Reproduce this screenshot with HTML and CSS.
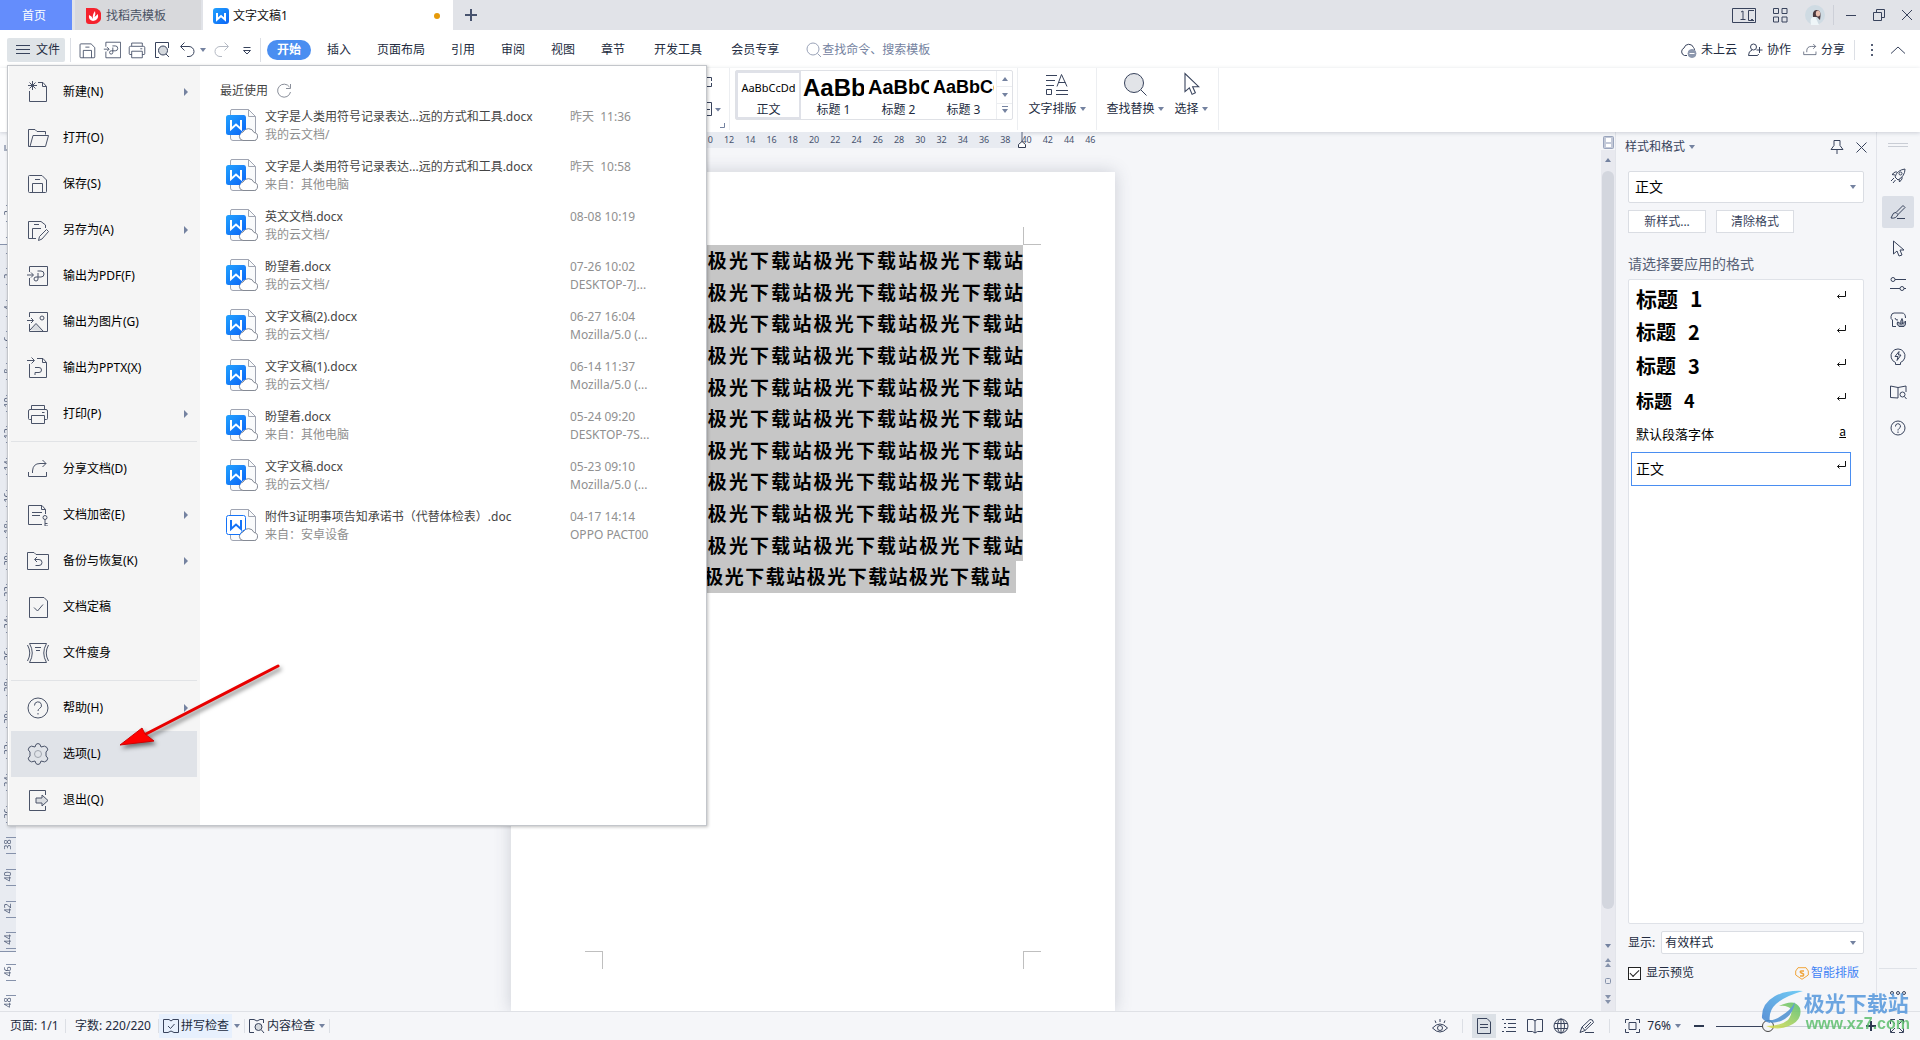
FILE: index.html
```html
<!DOCTYPE html>
<html lang="zh-CN">
<head>
<meta charset="utf-8">
<title>文字文稿1</title>
<link rel="stylesheet" href="styles.css">
</head>
<body>
<svg class="defs" aria-hidden="true">
  <defs>
    <linearGradient id="blue" x1="0" y1="0" x2="1" y2="1"><stop offset="0" stop-color="#22a2ff"/><stop offset="1" stop-color="#0a63f5"/></linearGradient>
    <linearGradient id="swBlue" x1="0" y1="1" x2="1" y2="0"><stop offset="0" stop-color="#3f7fd0"/><stop offset="1" stop-color="#5cc6f5"/></linearGradient>
    <linearGradient id="swGreen" x1="0" y1="1" x2="1" y2="0"><stop offset="0" stop-color="#e6e04a"/><stop offset="1" stop-color="#4fbd6c"/></linearGradient>
    <symbol id="cloudfile" viewBox="0 0 32 34">
      <path d="M5.500 1.500H22.500L29.500 8.500V32.500H7Q4.500 32.500 4.500 30V3Q4.500 1.500 6 1.500" fill="#fafbfc" stroke="#a0a5b2"/>
      <path d="M22.500 1.500V8.500H29.500" fill="none" stroke="#a0a5b2"/>
      <path d="M17 32.500H27A4 4 0 0 0 28 24.500A6 6 0 0 0 17 24A4.300 4.300 0 0 0 17 32.500Z" fill="#fff" stroke="#858a94"/>
    </symbol>
    <symbol id="docx" viewBox="0 0 32 34">
      <use href="#cloudfile"/>
      <path d="M2.500 7H18A2.500 2.500 0 0 1 20 9.500V21.500Q16 22 14 27H2.500A2.500 2.500 0 0 1 0 24.500V9.500A2.500 2.500 0 0 1 2.500 7Z" fill="url(#blue)"/>
      <path d="M5 12V21L10 16.500L15 21V12" fill="none" stroke="#fff" stroke-width="2"/>
    </symbol>
    <symbol id="doc" viewBox="0 0 32 34">
      <use href="#cloudfile"/>
      <path d="M2.500 7.500H17.500A2 2 0 0 1 19.500 9.500V21.500Q16 22 14 26.500H2.500A2 2 0 0 1 .5 24.500V9.500A2 2 0 0 1 2.500 7.500Z" fill="#fff" stroke="#1473f8"/>
      <path d="M5 12V21L10 16.500L15 21V12" fill="none" stroke="#1473f8" stroke-width="2"/>
    </symbol>
    <symbol id="enter" viewBox="0 0 10 10"><path d="M9.500 1V6.500H1.500M3.500 4.500L1.500 6.500L3.500 8.500" fill="none" stroke="#111"/></symbol>
    <symbol id="save" viewBox="0 0 22 22"><path d="M2.500 4.500Q2.500 3.500 3.500 3.500H16L20.500 8V19.500Q20.500 20.500 19.500 20.500H3.500Q2.500 20.500 2.500 19.500ZM6.500 20.500V11.500H16.500V20.500M9 7.500H14"/></symbol>
    <symbol id="pdf" viewBox="0 0 22 22"><path d="M3.500 7V1.500H21.500V20.500H3.500V13M1 10H7M5 7.500L7.500 10L5 12.500M11.500 6H15A3 3 0 0 1 15 12H10A2 2 0 1 0 12 14V8"/></symbol>
    <symbol id="print" viewBox="0 0 22 22"><path d="M4.500 6V2.500H17.500V6M4.500 16.500H2.500Q1.500 16.500 1.500 15.500V8Q1.500 6.500 3 6.500H19Q20.500 6.500 20.500 8V15.500Q20.500 16.500 19.500 16.500H17.500M4.500 12.500H17.500V20.500H4.500ZM15 9.500H17.500"/></symbol>
    <symbol id="share" viewBox="0 0 22 22"><path d="M2.500 14V18.500H20.500V14M7 15V13Q7 6.500 14 6.500H20M16.500 3L20 6.500L16.500 10"/></symbol>
    <symbol id="help" viewBox="0 0 22 22"><circle cx="11" cy="11" r="10"/><path d="M7.500 8.500A3.500 3.500 0 1 1 12.500 11.500Q11 12.500 11 14M11 16V17.500"/></symbol>
    <symbol id="cursor" viewBox="0 0 22 22"><path d="M5.500 1.500V18L9.500 14.500L12 20.500L15 19L12.500 13.500H18Z"/></symbol>
  </defs>
</svg>

<header class="tabs">
  <button class="tab home">首页</button>
  <button class="tab store"><svg width="15" height="16" viewBox="0 0 15 16"><path d="M0 0H8A7.500 8 0 0 1 8 16H3Q0 16 0 13Z" fill="#f5222d"/><path d="M7 13Q2 12 3 7Q6 8 7 11Q6 7 9 3Q10 6 8.500 9L12 6Q13 12 7 13" fill="#fff"/></svg>找稻壳模板</button>
  <button class="tab current"><svg width="16" height="16" viewBox="0 0 16 16"><rect width="16" height="16" rx="3" fill="url(#blue)"/><path d="M4 5V11.500L8 8L12 11.500V5" fill="none" stroke="#fff" stroke-width="2"/></svg>文字文稿1<span class="unsaved"></span></button>
  <button class="plus" aria-label="新建标签"><svg width="12" height="12" viewBox="0 0 12 12"><path d="M6 0V12M0 6H12" stroke="#47536e" stroke-width="2"/></svg></button>
  <div class="window-tools">
    <svg class="ln" width="24" height="15" viewBox="0 0 24 15"><path d="M.5.5H23.500V14.500H.5ZM9 4L11 3V11M8.500 11.500H13.500M22 2.500H16.500V12.500H22M19 11.500H21"/></svg>
    <svg class="ln" width="15" height="15" viewBox="0 0 15 15"><path d="M.5.5H5.500V5.500H.5ZM9 .5H14V5.500H9ZM.5 9H5.500V14H.5ZM9 9H14V14H9Z"/></svg>
    <svg width="20" height="20" viewBox="0 0 20 20"><circle cx="10" cy="10" r="10" fill="#cfdbe3"/><path d="M6 20Q4 12 10 11L14 20Z" fill="#eef5f8"/><path d="M8 12Q7 6 11 5Q16 4 15.500 11L15 15L12 12Z" fill="#4a3a40"/><ellipse cx="13" cy="8.500" rx="2.200" ry="3" fill="#e9bfb0"/></svg>
    <i class="vline"></i>
    <button aria-label="最小化"><svg class="ln" width="10" height="12" viewBox="0 0 10 12"><path d="M0 6.500H10"/></svg></button>
    <button aria-label="还原"><svg class="ln" width="12" height="12" viewBox="0 0 12 12"><path d="M.5 3.500H8.500V11.500H.5ZM3.500 3V.5H11.500V8.500H9"/></svg></button>
    <button aria-label="关闭"><svg class="ln" width="10" height="10" viewBox="0 0 10 10"><path d="M0 0L10 10M10 0L0 10"/></svg></button>
  </div>
</header>

<nav class="menubar">
  <button class="file-btn"><svg class="ln" width="14" height="11" viewBox="0 0 14 11"><path d="M0 1.500H14M0 5.500H14M0 9.500H14"/></svg>文件</button>
  <i class="vline tall"></i>
  <div class="quick">
    <button aria-label="保存"><svg class="ln" width="18" height="18"><use href="#save"/></svg></button>
    <button aria-label="输出为PDF"><svg class="ln" width="18" height="18"><use href="#pdf"/></svg></button>
    <button aria-label="打印"><svg class="ln" width="18" height="18"><use href="#print"/></svg></button>
    <button aria-label="打印预览"><svg class="ln" width="18" height="18" viewBox="0 0 18 18"><path d="M6 16.500H2.500V1.500H15.500V7M13 13L16 16"/><circle cx="10" cy="9.500" r="4.500" fill="#d5d9de"/></svg></button>
    <button aria-label="撤销"><svg class="ln" width="18" height="18" viewBox="0 0 18 18"><path d="M3 5.500H11A5 5 0 0 1 11 15.500H9M6.500 1.500L2.500 5.500L6.500 9.500"/></svg></button>
    <i class="caret"></i>
    <button aria-label="恢复"><svg class="ln faint" width="18" height="18" viewBox="0 0 18 18"><path d="M15 5.500H7A5 5 0 0 0 7 15.500H9M11.500 1.500L15.500 5.500L11.500 9.500"/></svg></button>
    <button aria-label="自定义"><svg class="ln" width="18" height="18" viewBox="0 0 18 18"><path d="M5.500 6.500H12.500M5.500 9.500H12.500L9 13Z"/></svg></button>
  </div>
  <i class="vline tall"></i>
  <button class="menu on">开始</button>
  <button class="menu">插入</button>
  <button class="menu">页面布局</button>
  <button class="menu">引用</button>
  <button class="menu">审阅</button>
  <button class="menu">视图</button>
  <button class="menu">章节</button>
  <button class="menu wide">开发工具</button>
  <button class="menu wide">会员专享</button>
  <label class="search"><svg class="ln" width="16" height="16" viewBox="0 0 16 16"><circle cx="7" cy="7" r="6"/><path d="M11.500 11.500L15 15"/></svg><input type="text" placeholder="查找命令、搜索模板" aria-label="查找命令、搜索模板"></label>
  <div class="menu-right">
    <button><svg class="ln" width="17" height="16" viewBox="0 0 17 16"><path d="M7 13.500H4.500A4 4 0 0 1 4 6A5 5 0 0 1 13.500 5.500Q14.500 6.500 14.500 8"/><circle cx="12" cy="11.500" r="4" fill="#8d98ae" stroke="#8d98ae"/><path d="M9.500 11.500H14.500" stroke="#fff"/></svg>未上云</button>
    <button><svg class="ln" width="15" height="16" viewBox="0 0 15 16"><circle cx="5.500" cy="5" r="3"/><path d="M4 8Q.5 9 .5 13.500H9.500Q10 13.500 10.500 12M11.500 5V11M8.500 8H14.500"/></svg>协作</button>
    <button><svg class="ln" width="15" height="15"><use href="#share"/></svg>分享</button>
    <i class="vline"></i>
    <button aria-label="更多"><svg width="4" height="14" viewBox="0 0 4 14"><path d="M1 1H3V3H1ZM1 6H3V8H1ZM1 11H3V13H1Z" fill="#555f75"/></svg></button>
    <button class="fold" aria-label="折叠功能区"><svg class="ln" width="14" height="8" viewBox="0 0 14 8"><path d="M0 7.500L7 1L14 7.500"/></svg></button>
  </div>
</nav>

<section class="ribbon">
  <div class="para-group">
    <svg class="ln" width="28" height="60" viewBox="2 0 28 60"><path d="M2 9.500H13.500V13M2 18.500H13.500V15M5 34.500H13.500V47.500H5M8 41.500H12"/><path d="M17 40H23L20 43.500Z" fill="#7482a0" stroke="none"/><path d="M26.500 55V59.500H22" stroke="#7482a0"/></svg>
  </div>
  <i class="split"></i>
  <div class="gallery">
    <button class="style sel"><span class="s0">AaBbCcDd</span>正文</button>
    <button class="style"><span class="s1">AaBb</span>标题 1</button>
    <button class="style"><span class="s2">AaBbCc</span>标题 2</button>
    <button class="style"><span class="s3">AaBbCc</span>标题 3</button>
    <div class="spin"><button aria-label="上一行"><i class="caret up"></i></button><button aria-label="下一行"><i class="caret"></i></button><button aria-label="更多样式"><i class="caret more"></i></button></div>
  </div>
  <i class="split"></i>
  <button class="big layout"><svg class="ln" width="24" height="24" viewBox="0 0 24 24"><path d="M1 3.500H12M1 8.500H10M1 13.500H9M1.500 17.500H6.500V22.500H1.500ZM11 18.500H23M11 22.500H23M12 14.500L16.500 2.500L22 14.500M13.500 10.500H20.500"/></svg><span>文字排版<i class="caret"></i></span></button>
  <i class="split"></i>
  <button class="big find"><svg class="ln" width="24" height="24" viewBox="0 0 24 24"><circle cx="11" cy="11" r="9.500" fill="#e2e4e8"/><path d="M18 18L23.500 23.500"/></svg><span>查找替换<i class="caret"></i></span></button>
  <button class="big pick"><svg class="ln" width="24" height="24"><use href="#cursor"/></svg><span>选择<i class="caret"></i></span></button>
  <i class="split"></i>
</section>

<main class="work">
  <div class="ruler-v">
    <i class="corner"></i>
    <div class="marks"><span>2</span><span class="zero"></span><span>2</span><span>4</span><span>6</span><span>8</span><span>10</span><span>12</span><span>14</span><span>16</span><span>18</span><span>20</span><span>22</span><span>24</span><span>26</span><span>28</span><span>30</span><span>32</span><span>34</span><span>36</span><span>38</span><span>40</span><span>42</span><span>44</span><span>46</span><span>48</span></div>
  </div>
  <div class="canvas">
    <div class="sheet">
      <div class="ruler-h">
        <div class="nums"><span></span><span>2</span><span>4</span><span>6</span><span>8</span><span>10</span><span>12</span><span>14</span><span>16</span><span>18</span><span>20</span><span>22</span><span>24</span><span>26</span><span>28</span><span>30</span><span>32</span><span>34</span><span>36</span><span>38</span><span>40</span><span>42</span><span>44</span><span>46</span></div>
        <svg class="indent" width="10" height="16" viewBox="0 0 10 16"><path d="M5 0V10" stroke="#55617c" fill="none"/><path d="M1.500 15.500V12.500L5 9.500L8.500 12.500V15.500Z" fill="#fff" stroke="#333c52"/></svg>
      </div>
      <article class="page">
        <i class="crop tl"></i><i class="crop tr"></i><i class="crop bl"></i><i class="crop br"></i>
        <div class="text">
          <p>极光下载站极光下载站极光下载站极光下载站</p>
          <p>极光下载站极光下载站极光下载站极光下载站</p>
          <p>极光下载站极光下载站极光下载站极光下载站</p>
          <p>极光下载站极光下载站极光下载站极光下载站</p>
          <p>极光下载站极光下载站极光下载站极光下载站</p>
          <p>极光下载站极光下载站极光下载站极光下载站</p>
          <p>极光下载站极光下载站极光下载站极光下载站</p>
          <p>极光下载站极光下载站极光下载站极光下载站</p>
          <p>极光下载站极光下载站极光下载站极光下载站</p>
          <p>极光下载站极光下载站极光下载站极光下载站</p>
          <p class="last">极光下载站极光下载站极光下载站极光下载站</p>
        </div>
      </article>
    </div>
  </div>
  <div class="scroll">
    <svg width="11" height="13" viewBox="0 0 11 13"><rect x=".5" y=".5" width="10" height="12" rx="1" fill="#c3c9d8" stroke="#9aa5bd"/><path d="M3 2H8V6H3ZM3 8H8V11H3Z" fill="#fff"/></svg>
    <div class="track"><i class="caret up"></i><div class="thumb"></div><i class="caret"></i>
      <svg width="8" height="9" viewBox="0 0 8 9"><path d="M1 4L4 0L7 4ZM1 9L4 5L7 9Z" fill="#8692ab"/></svg>
      <svg width="8" height="8" viewBox="0 0 8 8"><rect x="1.500" y="1.500" width="5" height="5" rx="1" fill="none" stroke="#8692ab"/></svg>
      <svg width="8" height="9" viewBox="0 0 8 9"><path d="M1 0H7L4 4ZM1 5H7L4 9Z" fill="#8692ab"/></svg>
    </div>
  </div>
  <aside class="panel">
    <div class="panel-head"><span>样式和格式</span><i class="caret"></i>
      <button class="pin" aria-label="固定"><svg class="ln" width="14" height="14" viewBox="0 0 14 14"><path d="M4 .5H10V5.500L13 9.500H1L4 5.500ZM7 9.500V14"/></svg></button>
      <button class="close" aria-label="关闭"><svg class="ln" width="11" height="11" viewBox="0 0 11 11"><path d="M.5.5L10.500 10.500M10.500.5L.5 10.500"/></svg></button></div>
    <div class="select big-select"><select aria-label="当前样式"><option>正文</option></select><i class="caret"></i></div>
    <div class="btns"><button>新样式...</button><button>清除格式</button></div>
    <h2>请选择要应用的格式</h2>
    <ul class="styles">
      <li class="h1"><span>标题</span><span>1</span><svg width="10" height="10"><use href="#enter"/></svg></li>
      <li class="h2"><span>标题</span><span>2</span><svg width="10" height="10"><use href="#enter"/></svg></li>
      <li class="h3"><span>标题</span><span>3</span><svg width="10" height="10"><use href="#enter"/></svg></li>
      <li class="h4"><span>标题</span><span>4</span><svg width="10" height="10"><use href="#enter"/></svg></li>
      <li class="dflt"><span>默认段落字体</span><u>a</u></li>
      <li class="body sel"><span>正文</span><svg width="10" height="10"><use href="#enter"/></svg></li>
    </ul>
    <div class="show"><label for="show">显示:</label><div class="select"><select id="show"><option>有效样式</option></select><i class="caret"></i></div></div>
    <div class="preview"><input type="checkbox" id="pv" checked><label for="pv">显示预览</label>
      <a href="#"><svg width="14" height="13" viewBox="0 0 14 13"><path d="M3 .7H11L13.300 4V8L7 12.300L.7 8V4Z" fill="none" stroke="#f0a43a"/><path d="M9 4H6Q5 4.300 5.500 5.500L8.500 7Q9 8.500 8 9H5" fill="none" stroke="#f0a43a" stroke-width="1.500"/></svg>智能排版</a></div>
  </aside>
  <div class="rail">
    <i class="grip"></i>
    <button aria-label="快捷"><svg class="ln" width="16" height="16" viewBox="0 0 16 16"><path d="M5 9Q7 2 15 1Q15 8 8 12ZM5 7L2 6.500L5 4H7M9 11L9.500 14L12 11V9M4 10L1 13M5.500 12L3 15"/><circle cx="10.500" cy="5.500" r="1.500"/></svg></button>
    <button class="sel" aria-label="样式"><svg class="ln" width="16" height="16" viewBox="0 0 16 16"><path d="M6 8.500L13 1.500L15 3.500L8 10.500M6 8.500Q3 8.500 2.500 11L1 14Q6 15 8 10.500ZM7 14.500H15"/></svg></button>
    <button aria-label="选择"><svg class="ln" width="16" height="17" viewBox="0 0 16 17"><path d="M3.500 1V14L7 11L9 16L12 15L10 10H14Z"/></svg></button>
    <button aria-label="属性"><svg class="ln" width="16" height="16" viewBox="0 0 16 16"><circle cx="3" cy="3.500" r="2"/><circle cx="12" cy="12.500" r="2"/><path d="M5 3.500H16M0 12.500H10M14 12.500H16"/></svg></button>
    <button aria-label="素材"><svg class="ln" width="16" height="16" viewBox="0 0 16 16"><path d="M6 14.500H2.500V8M2.500 8Q.5 7 1 4.500Q1.500 1 4 1H12Q15.500 1 15.500 6M5 6Q5.500 8.500 8 8"/><path d="M9 14.500Q6 12 7.500 10Q9.500 10 11 12.500Q10 9 12 6.500Q13.500 9 12.500 12L15.500 9Q16.500 13 14 14.500Z" fill="#a5abb8"/></svg></button>
    <button aria-label="灵感"><svg class="ln" width="16" height="17" viewBox="0 0 16 17"><path d="M5.500 16.500V14.500A7 7 0 1 1 10.500 14.500V16.500ZM9 3.500L5 8.500H8L7 12.500L11 7H8.500Z"/></svg></button>
    <button aria-label="阅读"><svg class="ln" width="17" height="15" viewBox="0 0 17 15"><path d="M8 13L.5 12.500V1L8 2.500L16 1V7M8 2.500V13"/><circle cx="12.500" cy="9.500" r="2.500"/><path d="M14.500 11.500L16.500 14"/></svg></button>
    <button aria-label="帮助"><svg class="ln" width="16" height="16" viewBox="0 0 16 16"><circle cx="8" cy="8" r="7"/><path d="M5.500 6.500A2.500 2.500 0 1 1 9 8.500Q8 9 8 10.500M8 11.500V13"/></svg></button>
    <div class="rail-end"><svg class="ln" width="16" height="6" viewBox="0 0 16 6"><circle cx="2" cy="3" r="1.500"/><circle cx="8" cy="3" r="1.500"/><circle cx="14" cy="3" r="1.500"/></svg></div>
  </div>
</main>

<footer class="status">
  <span class="pages">页面: 1/1</span><i class="vline"></i>
  <span class="words">字数: 220/220</span><i class="vline"></i>
  <button class="spell"><svg class="ln" width="16" height="15" viewBox="0 0 16 15"><path d="M6 .5H.5V13.500H5L8 12L11 13.500H15.500V.5H10L8 2L6 .5M5 7L7.500 9.500L11.500 5"/></svg>拼写检查</button><i class="caret"></i><i class="vline"></i>
  <button class="check"><svg class="ln" width="16" height="15" viewBox="0 0 16 15"><path d="M5 13.500H.5V.5H5L8 2L11 .5H14.500V4M12.500 11L15 14"/><circle cx="9.500" cy="8" r="3.500" fill="#d5d9de"/></svg>内容检查</button><i class="caret"></i><i class="vline"></i>
  <div class="views">
    <button aria-label="护眼模式"><svg class="ln" width="16" height="15" viewBox="0 0 16 15"><path d="M.5 9Q8 1 15.500 9Q8 17 .5 9ZM8 0V3M3 1.500L4 4M13 1.500L12 4"/><circle cx="8" cy="9" r="2.500"/></svg></button>
    <i class="vline"></i>
    <button class="sel" aria-label="页面视图"><svg class="ln" width="14" height="16" viewBox="0 0 14 16"><path d="M.5.5H10L13.500 4V15.500H.5ZM3 6.500H11M3 9.500H11"/></svg></button>
    <button aria-label="大纲"><svg class="ln" width="14" height="14" viewBox="0 0 14 14"><path d="M0 .5H2M4 .5H14M2 4.500H4M6 4.500H14M2 8.500H4M6 8.500H14M0 12.500H2M4 12.500H14"/></svg></button>
    <button aria-label="阅读版式"><svg class="ln" width="16" height="15" viewBox="0 0 16 15"><path d="M8 14L5.500 12.500H.5V.5H6L8 2L10 .5H15.500V12.500H10.500ZM8 2V14"/></svg></button>
    <button aria-label="Web版式"><svg class="ln" width="16" height="16" viewBox="0 0 16 16"><circle cx="8" cy="8" r="7"/><ellipse cx="8" cy="8" rx="3.500" ry="7"/><path d="M8 1V15M1.500 5.500H14.500M1.500 10.500H14.500"/></svg></button>
    <button aria-label="写作模式"><svg class="ln" width="16" height="16" viewBox="0 0 16 16"><path d="M1 14.500L3 9L11 1.500Q14 1 14.500 4.500L6 12.500ZM3 9L6 12.500M6 10L12 4M6 14.500H15"/></svg></button>
    <i class="vline"></i>
    <button aria-label="适应页面"><svg class="ln" width="15" height="14" viewBox="0 0 15 14"><path d="M.5 4V.5H4M11 .5H14.500V4M14.500 10V13.500H11M4 13.500H.5V10M4 3.500H11V10.500H4Z"/></svg></button>
    <span class="pct">76%<i class="caret"></i></span>
    <button aria-label="缩小"><svg width="10" height="10" viewBox="0 0 10 10"><path d="M0 5H10" stroke="#2c3850" stroke-width="2"/></svg></button>
    <input type="range" min="0" max="100" value="36" aria-label="缩放">
    <button aria-label="放大"><svg width="10" height="10" viewBox="0 0 10 10"><path d="M0 5H10M5 0V10" stroke="#2c3850" stroke-width="2"/></svg></button>
    <button aria-label="全屏"><svg class="ln" width="14" height="14" viewBox="0 0 14 14"><path d="M.5 5V.5H5M9 .5H13.500V5M13.500 9V13.500H9M5 13.500H.5V9M1 1L5 5M13 1L9 5M13 13L9 9M1 13L5 9"/></svg></button>
  </div>
</footer>

<div class="filemenu">
  <ul class="cmds">
    <li><svg class="ln" width="22" height="22" viewBox="0 0 22 22"><path d="M2.500 10V20.500H19.500V5.500L16 1.500H11M15.500 1.500V5.500H19.500M5.500 0V9M1 4.500H10M2.500 1.500L8.500 7.500M8.500 1.500L2.500 7.500"/></svg>新建(N)<i class="arrow"></i></li>
    <li><svg class="ln" width="22" height="22" viewBox="0 0 22 22"><path d="M1.500 19.500V2.500H8L10 4.500H18.500V7.500M1.500 19.500H18.500L21.500 8.500H6L3 19.500"/></svg>打开(O)</li>
    <li><svg class="ln" width="22" height="22" viewBox="1 1 22 22"><use href="#save" width="22" height="22"/></svg>保存(S)</li>
    <li><svg class="ln" width="22" height="22" viewBox="0 0 22 22"><path d="M9 19.500H1.500V2.500H14L18.500 6V9M5.500 19V9.500H14M7 5.500H12M11.500 21.500L12.500 17.500L19.500 10.500L21.500 12.500L15 20Z"/></svg>另存为(A)<i class="arrow"></i></li>
    <li><svg class="ln" width="22" height="22" viewBox="1 0 22 22"><use href="#pdf" width="22" height="22"/></svg>输出为PDF(F)</li>
    <li><svg class="ln" width="22" height="22" viewBox="1 0 22 22"><path d="M3.500 6V1.500H21.500V20.500H3.500V13M1 9.500H7M5 7L7.500 9.500L5 12"/><path d="M4 19L10 12.500L17 20" fill="#d9dce0"/><circle cx="16" cy="7" r="2"/></svg>输出为图片(G)</li>
    <li><svg class="ln" width="22" height="22" viewBox="1 0 22 22"><path d="M3.500 7V20.500H20.500V5.500L17 1.500H11M16.500 1.500V5.500H20.500M1 3.500H8M5.500 .5L8.500 3.500L5.500 6.500M9 10.500H13A2.500 2.500 0 0 1 13 15.500H9V18"/></svg>输出为PPTX(X)</li>
    <li><svg class="ln" width="22" height="22"><use href="#print"/></svg>打印(P)<i class="arrow"></i></li>
    <li class="rule"></li>
    <li><svg class="ln" width="22" height="22" viewBox="0 0 22 22"><path d="M1.500 14V18.500H19.500V14M5.500 15V13Q6 5.500 13 5.500H19M15.500 2L19 5.500L15.500 9"/></svg>分享文档(D)</li>
    <li><svg class="ln" width="22" height="22" viewBox="0 0 22 22"><path d="M15 20.500H1.500V1.500H15L18.500 5.500V10M14.500 1.500V5.500H18.500M5 8.500H15M5 11.500H13"/><circle cx="18" cy="13.500" r="2"/><path d="M18 15.500V22H21M18 19.500H20.500"/></svg>文档加密(E)<i class="arrow"></i></li>
    <li><svg class="ln" width="22" height="22" viewBox="0 0 22 22"><path d="M.5 19.500V2.500H7L9 4.500H21.500V19.500ZM8 9.500H12A3 3 0 0 1 12 15.500H8.500M10 7L7.500 9.500L10 12"/></svg>备份与恢复(K)<i class="arrow"></i></li>
    <li><svg class="ln" width="22" height="22" viewBox="1 0 22 22"><path d="M3.500 1.500H18L21.500 5V21.500H3.500ZM8 11.500L11.500 15L17 8.500"/></svg>文档定稿</li>
    <li><svg class="ln" width="22" height="22" viewBox="0 0 22 22"><path d="M2.500 1.500H19.500Q14 11 19.500 20.500H2.500Q8 11 2.500 1.500M.5 3Q5 11 .5 19M21.500 3Q17 11 21.500 19M8 5.500H14M9 8.500H13"/></svg>文件瘦身</li>
    <li class="rule"></li>
    <li><svg class="ln" width="22" height="22"><use href="#help"/></svg>帮助(H)<i class="arrow"></i></li>
    <li class="hover"><svg class="ln" width="22" height="22" viewBox="0 0 22 22"><path d="M8 4Q8.500 .5 11 .5Q13.500 .5 14 4Q18 2 20 4.500Q22 7 19 9V13Q22 15 20 17.500Q18 20 14 18Q13.500 21.500 11 21.500Q8.500 21.500 8 18Q4 20 2 17.500Q0 15 3 13V9Q0 7 2 4.500Q4 2 8 4Z"/><circle cx="11" cy="11" r="3.500" stroke="#a0a5ae"/></svg>选项(L)</li>
    <li><svg class="ln" width="22" height="22" viewBox="1 0 22 22"><path d="M19.500 6V1.500H3.500V21.500H19.500V17"/><path d="M10 9H16V6L22 11.500L16 17V14H10Z" fill="#d9dce0"/></svg>退出(Q)</li>
  </ul>
  <div class="recent">
    <h2>最近使用<svg class="ln" width="16" height="16" viewBox="0 0 16 16"><path d="M13.500 4A6.500 6.500 0 1 0 14.500 9M14.500 1V5.500H10"/></svg></h2>
    <ul>
      <li><svg width="32" height="34"><use href="#docx"/></svg><div><b>文字是人类用符号记录表达...远的方式和工具.docx</b><small>我的云文档/</small></div><div class="when"><span>昨天&nbsp; 11:36</span></div></li>
      <li><svg width="32" height="34"><use href="#docx"/></svg><div><b>文字是人类用符号记录表达...远的方式和工具.docx</b><small>来自：其他电脑</small></div><div class="when"><span>昨天&nbsp; 10:58</span></div></li>
      <li><svg width="32" height="34"><use href="#docx"/></svg><div><b>英文文档.docx</b><small>我的云文档/</small></div><div class="when"><span>08-08 10:19</span></div></li>
      <li><svg width="32" height="34"><use href="#docx"/></svg><div><b>盼望着.docx</b><small>我的云文档/</small></div><div class="when"><span>07-26 10:02</span><span>DESKTOP-7J...</span></div></li>
      <li><svg width="32" height="34"><use href="#docx"/></svg><div><b>文字文稿(2).docx</b><small>我的云文档/</small></div><div class="when"><span>06-27 16:04</span><span>Mozilla/5.0 (...</span></div></li>
      <li><svg width="32" height="34"><use href="#docx"/></svg><div><b>文字文稿(1).docx</b><small>我的云文档/</small></div><div class="when"><span>06-14 11:37</span><span>Mozilla/5.0 (...</span></div></li>
      <li><svg width="32" height="34"><use href="#docx"/></svg><div><b>盼望着.docx</b><small>来自：其他电脑</small></div><div class="when"><span>05-24 09:20</span><span>DESKTOP-7S...</span></div></li>
      <li><svg width="32" height="34"><use href="#docx"/></svg><div><b>文字文稿.docx</b><small>我的云文档/</small></div><div class="when"><span>05-23 09:10</span><span>Mozilla/5.0 (...</span></div></li>
      <li><svg width="32" height="34"><use href="#doc"/></svg><div><b>附件3证明事项告知承诺书（代替体检表）.doc</b><small>来自：安卓设备</small></div><div class="when"><span>04-17 14:14</span><span>OPPO PACT00</span></div></li>
    </ul>
  </div>
  <svg class="pointer" width="170" height="92" viewBox="0 0 170 92"><path d="M160 6L26 75" stroke="#e80000" stroke-width="3" stroke-linecap="round"/><path d="M2 85L24 68L27 74L36 81Z" fill="#ff0000" stroke="#d00000"/></svg>
</div>

<div class="brand">
  <svg width="42" height="44" viewBox="0 0 42 44"><path d="M1 28Q0 14 14 6Q26 0 42 1Q24 6 15 14Q7 21 9 33Q4 32 1 28Z" fill="url(#swBlue)"/><path d="M18 16Q34 8 39 18Q42 30 28 36Q16 41 5 36Q20 36 27 30Q34 20 27 17Q23 15 18 16Z" fill="url(#swGreen)"/><path d="M1 26Q8 34 20 26Q30 20 34 12Q32 26 20 31Q6 36 1 26Z" fill="#4a8fd0"/></svg>
  <div><strong>极光下载站</strong><span>www.xz7.com</span></div>
</div>
</body>
</html>
```

FILE: styles.css
```css
* { box-sizing: border-box; }
html, body { height: 100%; }
body {
  margin: 0;
  min-height: 700px;
  display: flex;
  flex-direction: column;
  position: relative;
  overflow: hidden;
  background: #f5f6f9;
  color: #222b40;
  font: 12px/18px "Noto Sans", "Noto Sans CJK SC", sans-serif;
}
button, input, select { font: inherit; color: inherit; }
button { border: 0; background: none; padding: 0; display: flex; align-items: center; white-space: nowrap; }
ul, p, h2 { margin: 0; padding: 0; list-style: none; font-size: 12px; font-weight: 400; }
svg { flex: none; display: block; }
.defs { position: absolute; width: 0; height: 0; }
.ln { fill: none; stroke: #38435c; }
.faint { stroke: #b5bac4; }
.vline { width: 1px; height: 14px; background: #dcdfe5; flex: none; }
.tall { height: 24px; }
.caret { flex: none; width: 0; height: 0; border: 3px solid transparent; border-top: 4px solid #7482a0; border-bottom: 0; }
.caret.up { border-top: 0; border-bottom: 4px solid #7482a0; }

/* title tabs */
.tabs { flex: none; height: 30px; display: flex; background: #e1e3e8; }
.tab { height: 30px; gap: 5px; padding: 2px 10px 0; }
.home { width: 72px; padding-left: 22px; background: #648dfc; color: #fff; }
.store { width: 126px; margin-left: 3px; padding-left: 11px; background: #d8d9dc; color: #4a5264; }
.current { width: 250px; margin-left: 2px; background: #fff; color: #111; gap: 4px; }
.unsaved { width: 6px; height: 6px; border-radius: 3px; background: #e69a0a; margin: 0 3px 0 auto; }
.plus { padding: 0 12px; }
.window-tools { margin-left: auto; display: flex; align-items: center; gap: 17px; padding-right: 8px; }
.window-tools .vline { height: 20px; margin: 0 -5px 0 -9px; background: #cdd0d8; }

/* menu bar */
.menubar { flex: none; height: 38px; display: flex; align-items: center; background: #fff; padding: 1px 0 0 7px; }
.file-btn { height: 24px; width: 58px; background: #dfe4e8; border-radius: 2px; padding-left: 9px; gap: 6px; margin-right: 5px; }
.quick { display: flex; align-items: center; gap: 7px; padding: 0 4px 0 7px; width: 189px; }
.quick .caret { margin-left: -3px; }
.menu { height: 20px; padding: 0 13px; }
.menu.on { margin: 0 3px 0 6px; padding: 0 10px; border-radius: 10px; background: #4a8ef1; color: #fff; font-weight: 700; }
.menu.wide { padding-left: 16px; }
.search { display: flex; align-items: center; color: #7482a0; margin-left: 14px; }
.search .ln { stroke: #9aa3b8; }
.search input { border: 0; outline: 0; padding: 0; width: 130px; }
.search input::placeholder { color: #7482a0; }
.menu-right { margin-left: auto; display: flex; align-items: center; gap: 11px; padding-right: 15px; }
.menu-right button { gap: 4px; }
.menu-right .vline { height: 20px; margin-left: -2px; }
.menu-right .vline + button { margin-left: 4px; }
.fold { margin-left: 6px; }

/* ribbon */
.ribbon { flex: none; height: 64px; display: flex; background: #fff; padding-left: 700px; box-shadow: 0 1px 4px rgba(40,50,80,.2); position: relative; }
.para-group { width: 29px; }
.split { width: 1px; height: 62px; background: #eceef1; flex: none; }
.gallery { height: 50px; margin: 2px 4px 0 5px; width: 278px; border: 1px solid #dfe1e6; border-radius: 2px; display: flex; }
.style { width: 65px; height: 48px; flex-direction: column; overflow: hidden; color: #222b40; line-height: 16px; padding: 2px; }
.style.sel { border: 2px solid #dfe1e8; padding: 0; }
.style span { width: 61px; overflow: hidden; text-align: left; height: 29px; line-height: 29px; color: #000; flex: none; }
.style .s0 { font-size: 11px; text-align: center; }
.s1, .s2, .s3 { font-family: "Liberation Sans", sans-serif; font-weight: 700; }
.s1 { font-size: 24px; }
.s2 { font-size: 20px; }
.s3 { font-size: 18px; }
.spin { flex: 1; border-left: 1px solid #eceef1; display: flex; flex-direction: column; }
.spin button { flex: 1; justify-content: center; border-bottom: 1px solid #eceef1; }
.spin button:last-child { border-bottom: 0; }
.more { position: relative; }
.more::before { content: ""; position: absolute; left: -3px; top: -7px; width: 6px; height: 1px; background: #7482a0; }
.big { flex-direction: column; height: 60px; gap: 4px; padding: 4px 0 0; }
.big span { display: flex; align-items: center; gap: 3px; }
.layout { width: 78px; }
.find { width: 76px; }
.pick { width: 36px; margin-right: 9px; }

/* work area */
.work { flex: 1; min-height: 0; display: flex; }
.ruler-v { width: 16px; flex: none; overflow: hidden; position: relative; padding-top: 65px; color: #55617c; font-size: 9px; background: linear-gradient(transparent 112px, #8692ab 112px, #8692ab 113px, #e8ebf1 113px, #e8ebf1 819px, #8692ab 819px, #8692ab 820px, transparent 820px); }
.corner { position: absolute; left: 4px; top: 13px; width: 6px; height: 6px; border: solid #a7afc0; border-width: 0 0 2px 2px; }
.marks { height: 822px; display: grid; grid-template-rows: repeat(26, 1fr); }
.marks span { writing-mode: vertical-rl; transform: rotate(180deg); display: flex; align-items: center; justify-content: center; width: 16px; line-height: 16px; background: linear-gradient(transparent 7px, #8692ab 7px, #8692ab 8px, transparent 8px, transparent 23px, #8692ab 23px, #8692ab 24px, transparent 24px) left / 10px 100% no-repeat; }
.canvas { flex: 1; min-width: 0; display: flex; justify-content: center; padding-left: 9px; overflow: hidden; }
.sheet { width: 604px; display: flex; flex-direction: column; }
.ruler-h { position: relative; flex: none; height: 16px; margin-bottom: 24px; background: linear-gradient(to right, transparent 91px, #e8ebf1 91px, #e8ebf1 511px, transparent 511px); }
.nums { width: 510px; margin-left: 80px; display: grid; grid-template-columns: repeat(24, 1fr); text-align: center; line-height: 15px; font-size: 9px; color: #47536e; }
.indent { position: absolute; left: 506px; top: 0; }
.page { flex: 1; position: relative; background: #fff; box-shadow: 0 0 16px rgba(60,70,90,.22); padding: 73px 92px 0 91px; }
.text { height: 348px; display: grid; grid-template-rows: repeat(11, 1fr); color: #000; }
.text p { background: #c6c6c6; font-size: 19px; line-height: 29px; white-space: nowrap; font-family: "Noto Sans CJK SC", sans-serif; font-weight: 700; text-align: justify; text-align-last: justify; }
.text .last { margin-right: 7px; padding-right: 6px; }
.crop { position: absolute; width: 18px; height: 18px; border: 0 solid #bfbfbf; }
.tl { left: 74px; top: 55px; border-width: 0 1px 1px 0; }
.tr { right: 74px; top: 55px; border-width: 0 0 1px 1px; }
.bl { left: 74px; bottom: 42px; border-width: 1px 1px 0 0; }
.br { right: 74px; bottom: 42px; border-width: 1px 0 0 1px; }

.scroll { width: 14px; flex: none; display: flex; flex-direction: column; align-items: center; gap: 1px; padding-top: 4px; }
.track { flex: 1; width: 14px; background: #e8e9ef; display: flex; flex-direction: column; align-items: center; padding: 8px 0 7px; }
.thumb { flex: 1; width: 12px; border-radius: 6px; background: #d3d6de; margin: 9px 0 35px; }
.track svg { margin-top: 10px; }

.panel { width: 262px; flex: none; border: solid #e2e4ea; border-width: 0 1px; display: flex; flex-direction: column; padding: 0 12px 29px; color: #38435c; }
.panel-head { display: flex; align-items: center; height: 20px; margin: 5px 0 14px -3px; gap: 4px; }
.pin { margin: 0 8px 0 auto; }
.close { margin-right: -3px; }
.select { position: relative; flex: 1; display: flex; }
.select select { appearance: none; width: 100%; height: 23px; border: 1px solid #dadde3; border-radius: 2px; background: #fff; padding: 0 3px; outline: 0; }
.select .caret { position: absolute; right: 8px; top: 10px; border-width: 4px 3px 0; }
.big-select { flex: none; }
.big-select select { height: 32px; font-size: 14px; padding: 0 6px; color: #000; }
.big-select .caret { top: 14px; }
.btns { display: flex; gap: 10px; margin: 7px 0 20px; }
.btns button { width: 78px; height: 23px; justify-content: center; border: 1px solid #dadde3; background: #fff; }
.panel h2 { font-size: 14px; line-height: 22px; color: #555f75; margin-bottom: 4px; }
.styles { flex: 1; background: #fff; border: 1px solid #dfe2e8; border-radius: 2px; padding: 2px 12px 0 2px; color: #000; }
.styles li { height: 34px; display: flex; align-items: center; gap: 12px; padding: 0 5px; font-weight: 700; font-family: "Noto Sans CJK SC", sans-serif; line-height: 30px; }
.styles span { padding-bottom: 2px; }
.styles svg, .styles u { margin: 0 0 8px auto; }
.styles .h1 { font-size: 21px; }
.styles .h2, .styles .h3 { font-size: 20px; }
.styles .h4 { font-size: 18px; }
.styles .dflt { font-size: 13px; font-weight: 400; }
.dflt u { font-size: 12px; }
.styles .body { font-size: 14px; font-weight: 400; }
.styles .sel { border: 1px solid #4a8ef1; padding: 0 4px; }
.show { display: flex; align-items: center; gap: 6px; margin: 7px 0 10px; color: #222b40; }
.preview { display: flex; align-items: center; gap: 5px; color: #222b40; height: 18px; }
.preview input { appearance: none; width: 13px; height: 13px; margin: 0; border: 1px solid #222; background: #fff; display: grid; place-items: center; }
.preview input::after { content: ""; width: 8px; height: 4px; border: solid #222; border-width: 0 0 1px 1px; transform: rotate(-45deg) translate(1px, -1px); }
.preview a { margin: 0 5px 0 auto; display: flex; align-items: center; gap: 2px; color: #3f82f5; text-decoration: none; }

.rail { width: 43px; flex: none; display: flex; flex-direction: column; align-items: center; gap: 4px; padding: 11px 1px 0 0; }
.grip { width: 20px; height: 4px; border: solid #c9cdd5; border-width: 1px 0; margin-bottom: 9px; }
.rail button { width: 32px; height: 32px; justify-content: center; border-radius: 2px; }
.rail .sel { background: #dbdfe7; }
.rail-end { margin-top: auto; width: 38px; height: 43px; border-top: 1px solid #dfe2e8; display: flex; justify-content: center; padding-top: 21px; }

/* status bar */
.status { flex: none; height: 29px; border-top: 1px solid #dfe1e6; display: flex; align-items: center; padding-left: 10px; color: #222b40; }
.pages { width: 55px; }
.words { width: 92px; padding-left: 9px; }
.status button { gap: 2px; height: 24px; }
.spell { background: #e7f0fd; padding: 0 3px 0 4px; }
.spell + .caret, .check + .caret { margin: 0 4px 0 2px; }
.check { padding: 0 2px 0 4px; }
.views { margin-left: auto; display: flex; align-items: center; padding-right: 10px; }
.views button { width: 26px; justify-content: center; }
.views .vline { margin: 0 9px; }
.views .sel { background: #dbe0e6; width: 24px; }
.pct { display: flex; align-items: center; gap: 4px; padding: 0 5px 0 2px; }
.views input { appearance: none; width: 140px; height: 12px; margin: 0 2px 0 4px; background: linear-gradient(to right, #38435c 36%, #c9cdd8 36%) center / 100% 1px no-repeat; }
.views input::-webkit-slider-thumb { appearance: none; width: 12px; height: 12px; border: 1px solid #444; border-radius: 6px; background: #f5f6f9; }

/* open file menu */
.filemenu { position: absolute; left: 7px; top: 65px; width: 700px; border: 1px solid #c3c6cb; background: #fff; box-shadow: 1px 1px 3px rgba(0,0,0,.25); display: flex; padding-left: 1px; }
.cmds { width: 191px; background: #f5f5f5; padding: 3px 3px 2px 2px; flex: none; color: #000; }
.cmds li { height: 46px; display: flex; align-items: center; gap: 14px; padding-left: 16px; }
.cmds .ln { stroke: #4a5368; }
.cmds .rule { height: 9px; padding: 0; }
.rule::before { content: ""; flex: 1; height: 1px; background: #e1e3e6; }
.cmds .hover { background: #e0e3e8; }
.arrow { margin: 0 9px 0 auto; border: 4px solid transparent; border-left: 4px solid #7482a0; border-right: 0; }
.recent { flex: 1; padding: 16px 0 0 20px; color: #444; }
.recent h2 { display: flex; align-items: center; gap: 8px; height: 18px; }
.recent h2 .ln { stroke: #8a8f9a; }
.recent ul { padding: 8px 0 0 6px; }
.recent li { height: 50px; display: grid; grid-template-columns: 32px 298px 1fr; column-gap: 7px; align-items: start; }
.recent b { display: block; font-weight: 400; white-space: nowrap; }
.recent small { display: block; font-size: 12px; color: #909090; }
.when { color: #909090; }
.when span { display: block; }
.pointer { position: absolute; left: 110px; top: 594px; filter: drop-shadow(2px 3px 2px rgba(0,0,0,.5)); }

/* site mark over the corner */
.brand { position: absolute; right: 10px; bottom: 6px; display: flex; gap: 1px; opacity: .85; pointer-events: none; }
.brand div { display: flex; flex-direction: column; font-family: "Noto Sans CJK SC", sans-serif; white-space: nowrap; }
.brand strong { font-size: 21px; line-height: 24px; color: #5597dc; }
.brand span { font: 700 16px/20px "Liberation Sans", sans-serif; color: #5fbf6f; padding-left: 2px; }
```
